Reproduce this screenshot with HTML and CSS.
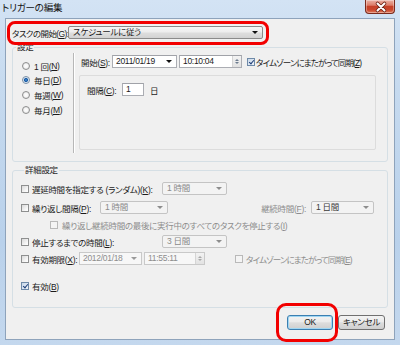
FILE: index.html
```html
<!DOCTYPE html>
<html lang="ja">
<head>
<meta charset="utf-8">
<link rel="stylesheet" href="styles.css">
</head>
<body>
<div class="window">
  <div class="titlebar">
    <span class="title">トリガーの編集</span>
    <div class="close">
      <svg width="30" height="14" viewBox="0 0 30 14">
        <path d="M11.5 3.5 L18.5 10.5 M18.5 3.5 L11.5 10.5" stroke="#6b2214" stroke-width="3.6" stroke-linecap="round" fill="none"/>
        <path d="M11.5 3.5 L18.5 10.5 M18.5 3.5 L11.5 10.5" stroke="#ffffff" stroke-width="2" stroke-linecap="round" fill="none"/>
      </svg>
    </div>
  </div>
  <div class="client">
    <div class="row-begin">
      <span class="lbl-begin">タスクの開始(<u>G</u>):</span>
      <div class="combo combo-btn">スケジュールに従う<span class="arrow"></span></div>
    </div>

    <fieldset class="group g1">
      <legend>設定</legend>
      <div class="g1-body">
        <div class="radios">
          <div class="radio-row"><span class="rb"></span>1 回(<u>N</u>)</div>
          <div class="radio-row"><span class="rb on"></span>毎日(<u>D</u>)</div>
          <div class="radio-row"><span class="rb"></span>毎週(<u>W</u>)</div>
          <div class="radio-row"><span class="rb"></span>毎月(<u>M</u>)</div>
        </div>
        <div class="sep"></div>
        <div class="right-col">
          <div class="start-row">
            <span class="lbl-start">開始(<u>S</u>):</span>
            <div class="field date w65">2011/01/19<span class="arrow"></span></div>
            <div class="field time w63">10:10:04<span class="spin"><i class="up"></i><i class="dn"></i></span></div>
            <span class="cb on ml5"></span>
            <span class="cb-text tight">タイムゾーンにまたがって同期(<u>Z</u>)</span>
          </div>
          <div class="panel">
            <div class="interval">
              <span class="lbl-int">間隔(<u>C</u>):</span>
              <div class="field num">1</div>
              <span class="unit">日</span>
            </div>
          </div>
        </div>
      </div>
    </fieldset>

    <fieldset class="group g2">
      <legend>詳細設定</legend>
      <div class="r">
        <span class="cb"></span>
        <span class="lbl w130">遅延時間を指定する (ランダム)(<u>K</u>):</span>
        <div class="combo dis w65">1 時間<span class="arrow"></span></div>
      </div>
      <div class="r mt6">
        <span class="cb"></span>
        <span class="lbl w68">繰り返し間隔(<u>P</u>):</span>
        <div class="combo dis w68">1 時間<span class="arrow"></span></div>
        <span class="lbl gray push">継続時間(<u>F</u>):</span>
        <div class="combo dis dark w63 ml5">1 日間<span class="arrow"></span></div>
      </div>
      <div class="r mt4">
        <span class="cb dcb indent"></span>
        <span class="lbl gray">繰り返し継続時間の最後に実行中のすべてのタスクを停止する(<u>I</u>)</span>
      </div>
      <div class="r mt4">
        <span class="cb"></span>
        <span class="lbl w130">停止するまでの時間(<u>L</u>):</span>
        <div class="combo dis w65">3 日間<span class="arrow"></span></div>
      </div>
      <div class="r mt4">
        <span class="cb"></span>
        <span class="lbl w47">有効期限(<u>X</u>):</span>
        <div class="field date dis w63">2012/01/18<span class="arrow"></span></div>
        <div class="field time dis w61 ml5">11:55:11<span class="spin"><i class="up"></i><i class="dn"></i></span></div>
        <span class="cb dcb ml30"></span>
        <span class="lbl gray tight">タイムゾーンにまたがって同期(<u>E</u>)</span>
      </div>
      <div class="r mt14">
        <span class="cb on"></span>
        <span class="lbl">有効(<u>B</u>)</span>
      </div>
    </fieldset>

    <div class="buttons">
      <div class="btn default">OK</div>
      <div class="btn w47">キャンセル</div>
    </div>
  </div>
  <div class="ring ring1"></div>
  <div class="ring ring2"></div>
</div>
</body>
</html>
```

FILE: styles.css
```css
* { box-sizing: border-box; }
html, body { margin: 0; padding: 0; }
body {
  width: 400px;
  height: 345px;
  overflow: hidden;
  font-family: "Liberation Sans", "Noto Sans CJK JP", sans-serif;
  font-size: 8.5px;
  letter-spacing: -0.3px;
  color: #1b1b1b;
  font-feature-settings: "palt";
}
u { text-decoration: underline; text-underline-offset: 1px; }
.tight { letter-spacing: -0.9px; }

.window {
  position: relative;
  width: 400px;
  height: 345px;
  display: flex;
  flex-direction: column;
  background: linear-gradient(180deg, #d3e3f4 0%, #c6daef 25%, #b9d1eb 70%, #c4d8ee 100%);
}

.titlebar {
  height: 18px;
  flex: none;
  display: flex;
  justify-content: space-between;
  align-items: flex-start;
  padding: 0 5px 0 2px;
}
.title {
  line-height: 13px;
  padding-top: 1px;
  font-size: 9.5px;
  letter-spacing: -0.2px;
  color: #111;
}
.close {
  width: 30px;
  height: 14px;
  border: 1px solid #7a2a1c;
  border-top: none;
  border-radius: 0 0 4px 4px;
  background: linear-gradient(180deg, #eab1a4 0%, #dc7d69 40%, #c64128 50%, #c9472c 75%, #e07a5c 100%);
  box-shadow: inset 0 0 0 1px rgba(255,255,255,0.35);
}
.close svg { display: block; }

.client {
  flex: 1;
  margin: 0 5px 5px 5px;
  border: 1px solid #8ea3bb;
  background: #f0f0f0;
  padding: 7px 6px 0 6px;
  display: flex;
  flex-direction: column;
}

.row-begin {
  display: flex;
  align-items: center;
  height: 13px;
}
.lbl-begin { width: 56px; white-space: nowrap; letter-spacing: -0.6px; }

.combo {
  height: 13px;
  border: 1px solid #acacac;
  border-radius: 2px;
  padding-left: 4px;
  display: flex;
  align-items: center;
  white-space: nowrap;
  line-height: 11px;
  flex: none;
}
.combo-btn {
  width: 195px;
  border-color: #8a8a8a;
  background: linear-gradient(180deg, #f6f6f6 0%, #ececec 48%, #dedede 52%, #d2d2d2 100%);
}
.arrow {
  margin-left: auto;
  margin-right: 4px;
  width: 0;
  height: 0;
  border-left: 3px solid transparent;
  border-right: 3px solid transparent;
  border-top: 3px solid #111;
}
.combo.dis {
  background: #f3f3f3;
  border-color: #c4c4c4;
  color: #8a8a8a;
}
.combo.dis .arrow { border-top-color: #8d8d8d; }
.combo.dark { color: #3a3a3a; }

.group {
  margin: 0;
  padding: 0;
  border: 1px solid #d5dfe5;
  border-radius: 3px;
  min-width: 0;
}
.group legend {
  padding: 0 1px;
  margin-left: 3px;
  line-height: 11px;
}
.g1 { margin-top: 3px; padding-bottom: 8px; }
.g1-body { display: flex; height: 100px; }
.radios {
  width: 60px;
  flex: none;
  padding: 7px 0 0 9px;
  display: flex;
  flex-direction: column;
  gap: 3.7px;
}
.radio-row {
  display: flex;
  align-items: center;
  height: 11px;
  white-space: nowrap;
}
.rb {
  width: 8px;
  height: 8px;
  border-radius: 50%;
  border: 1px solid #8e8f8f;
  background: radial-gradient(circle, #ffffff 0, #f4f4f4 2px, #d6d6d6 4px);
  margin-right: 4px;
  flex: none;
}
.rb.on {
  border-color: #7a8ea4;
  background: radial-gradient(circle, #4c8fd6 0, #1d5ea5 1.6px, #d8e4f0 2.4px, #ffffff 4px);
}
.sep {
  width: 2px;
  flex: none;
  border-left: 1px solid #b7b7b7;
  border-right: 1px solid #ffffff;
}
.right-col {
  flex: 1;
  padding: 2px 11px 0 4px;
  display: flex;
  flex-direction: column;
}
.start-row {
  display: flex;
  align-items: center;
  height: 13px;
  padding-left: 2px;
  white-space: nowrap;
}
.lbl-start { width: 31px; }

.field {
  height: 13px;
  border: 1px solid #abadb3;
  border-top-color: #a0a2a8;
  background: #ffffff;
  padding-left: 3px;
  display: flex;
  align-items: center;
  line-height: 11px;
  flex: none;
  white-space: nowrap;
}
.field.time { margin-left: 2px; }
.field.dis {
  background: #f7f7f7;
  border-color: #c9c9c9;
  color: #8d8d8d;
}
.field.dis .arrow { border-top-color: #9a9a9a; }
.spin {
  margin-left: auto;
  width: 9px;
  height: 11px;
  border-left: 1px solid #d5d5d5;
  background: linear-gradient(180deg, #f3f3f3, #e2e2e2);
  display: flex;
  flex-direction: column;
  align-items: center;
  justify-content: center;
  gap: 1px;
}
.spin i {
  width: 0;
  height: 0;
  border-left: 2px solid transparent;
  border-right: 2px solid transparent;
}
.spin .up { border-bottom: 2px solid #6d7c8f; }
.spin .dn { border-top: 2px solid #6d7c8f; }
.field.dis .spin .up { border-bottom-color: #a8a8a8; }
.field.dis .spin .dn { border-top-color: #a8a8a8; }

.cb {
  width: 8px;
  height: 8px;
  border: 1px solid #8e8f8f;
  background: linear-gradient(135deg, #d9d9d9, #f7f7f7 70%, #ffffff);
  margin-right: 3px;
  flex: none;
  position: relative;
}
.cb.on {
  border-color: #6f8aa8;
  background: linear-gradient(135deg, #c8d8ea, #eef3f8);
}
.cb.on::after {
  content: "";
  position: absolute;
  left: 2px;
  top: 0px;
  width: 2px;
  height: 4px;
  border-right: 1.3px solid #1f3f79;
  border-bottom: 1.3px solid #1f3f79;
  transform: rotate(40deg);
}
.cb.dcb {
  border-color: #b9b9b9;
  background: #f4f4f4;
}
.cb-text { margin-left: -2px; }

.panel {
  margin-top: 7px;
  height: 75px;
  border: 1px solid #dcdcdc;
  border-radius: 2px;
  padding: 7px 0 0 7px;
}
.interval {
  display: flex;
  align-items: center;
  height: 13px;
}
.lbl-int { width: 35px; white-space: nowrap; }
.field.num { width: 22px; }
.unit { margin-left: 6px; }

.g2 { margin-top: 3px; padding: 6px 13px 15px 8px; }
.r {
  display: flex;
  align-items: center;
  height: 13px;
  white-space: nowrap;
}
.lbl { flex: none; }
.gray { color: #8d8d8d; }
.w130 { width: 130px; }
.w68 { width: 68px; }
.w65 { width: 65px; }
.w63 { width: 63px; }
.w61 { width: 61px; }
.w47 { width: 47px; }
.push { margin-left: auto; }
.ml5 { margin-left: 5px; }
.ml30 { margin-left: 30px; }
.indent { margin-left: 29px; margin-right: 4px; }
.mt4 { margin-top: 4px; }
.mt6 { margin-top: 6px; }
.mt14 { margin-top: 14px; }

.buttons {
  display: flex;
  justify-content: flex-end;
  gap: 5px;
  margin-top: 7px;
  margin-right: 3px;
}
.btn {
  width: 46px;
  height: 15px;
  border: 1px solid #707070;
  border-radius: 3px;
  background: linear-gradient(180deg, #f3f3f3 0%, #ebebeb 45%, #dddddd 52%, #cfcfcf 100%);
  display: flex;
  align-items: center;
  justify-content: center;
  line-height: 11px;
  flex: none;
}
.btn.w47 { width: 47px; }
.btn.default {
  border-color: #3c7fb1;
  box-shadow: inset 0 0 0 1px #9fd6f3;
}

.ring {
  position: absolute;
  border: 3px solid #f20000;
}
.ring1 {
  left: 7px;
  top: 21px;
  width: 262px;
  height: 24px;
  border-radius: 8px;
}
.ring2 {
  left: 276px;
  top: 303px;
  width: 62px;
  height: 39px;
  border-radius: 10px;
}
```
